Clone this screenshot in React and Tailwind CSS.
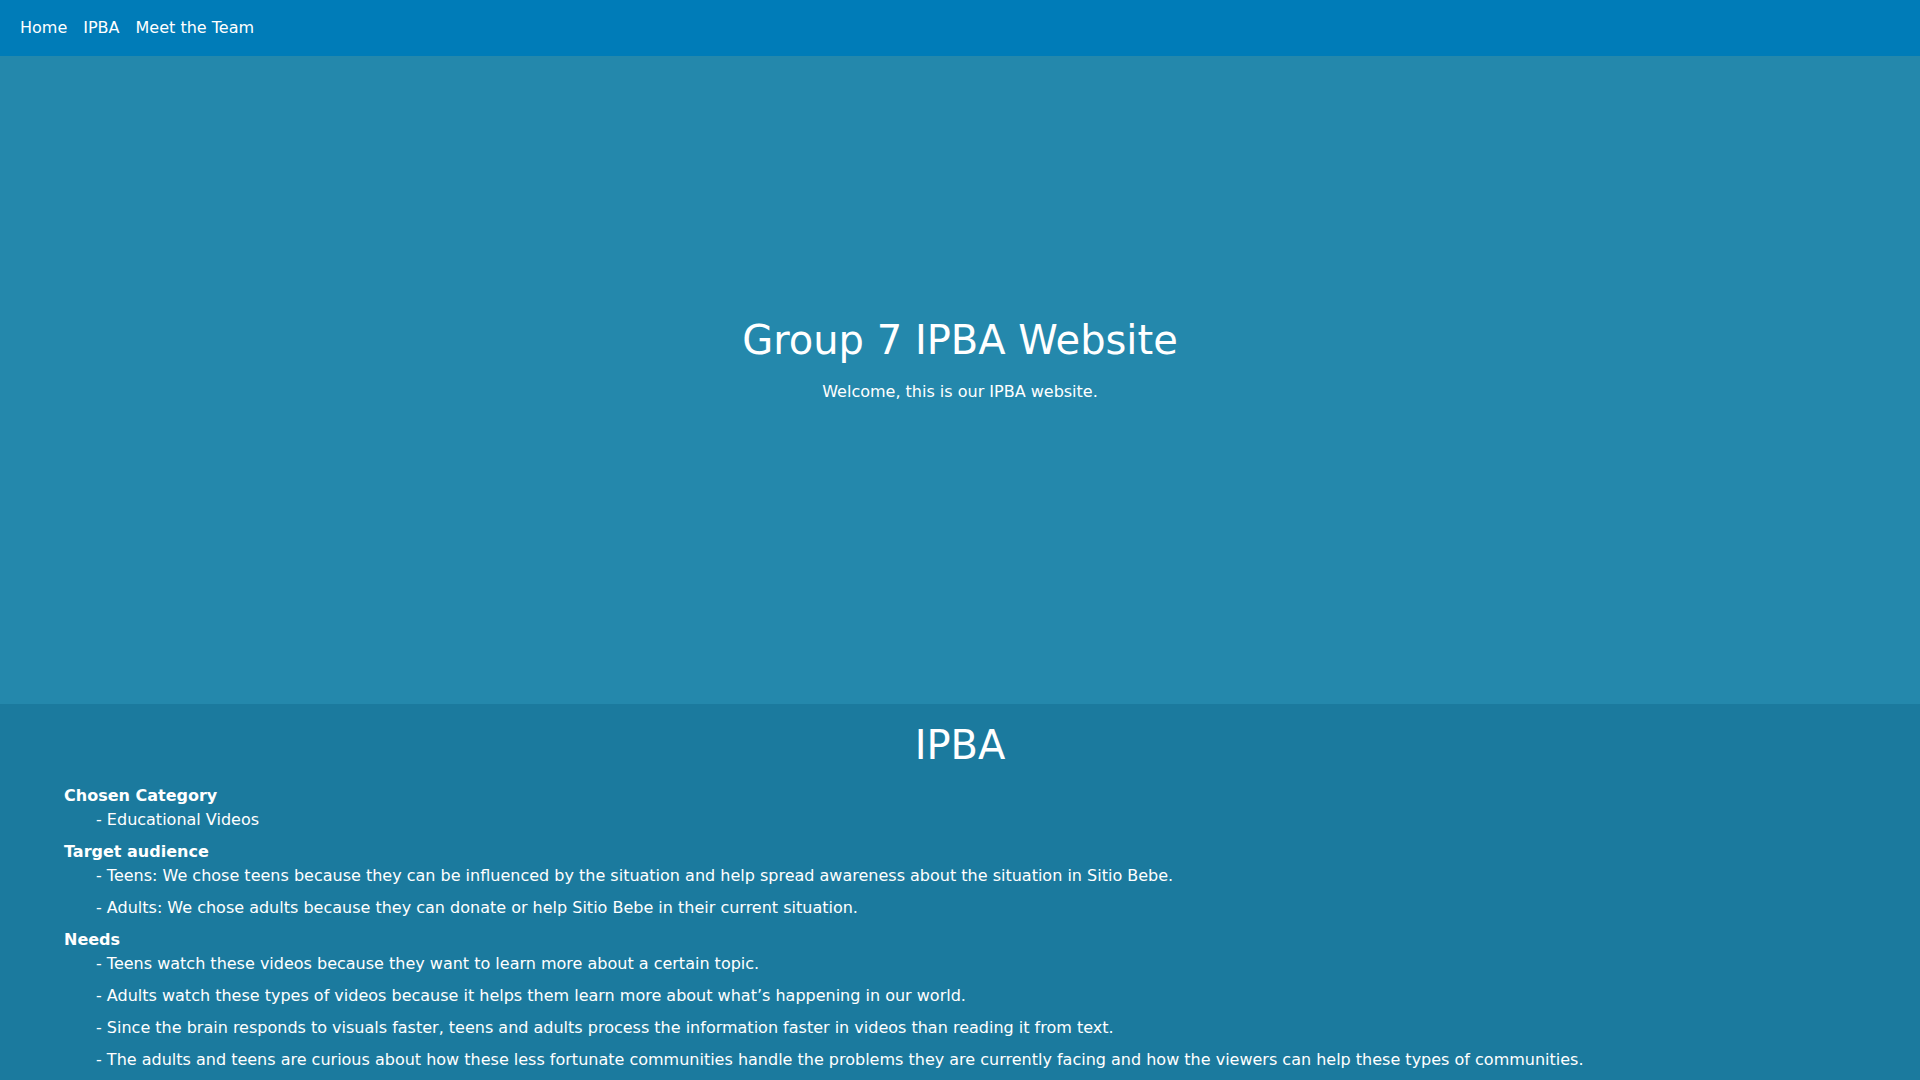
const links = ["Home", "IPBA", "Meet the Team"];

const sections = [
  {
    title: "Chosen Category",
    items: ["- Educational Videos"],
  },
  {
    title: "Target audience",
    items: [
      "- Teens: We chose teens because they can be influenced by the situation and help spread awareness about the situation in Sitio Bebe.",
      "- Adults: We chose adults because they can donate or help Sitio Bebe in their current situation.",
    ],
  },
  {
    title: "Needs",
    items: [
      "- Teens watch these videos because they want to learn more about a certain topic.",
      "- Adults watch these types of videos because it helps them learn more about what\u2019s happening in our world.",
      "- Since the brain responds to visuals faster, teens and adults process the information faster in videos than reading it from text.",
      "- The adults and teens are curious about how these less fortunate communities handle the problems they are currently facing and how the viewers can help these types of communities.",
    ],
  },
];

export default function App() {
  return (
    <div className="min-h-screen bg-[#1b7a9e] font-['DejaVu_Sans',sans-serif] text-white">
      <nav className="flex h-14 items-center gap-4 bg-[#007cb8] px-5 text-base">
        {links.map((l) => (
          <a key={l} href="#" className="leading-6 text-white">
            {l}
          </a>
        ))}
      </nav>

      <header className="flex h-[648px] flex-col items-center bg-[#2488ac] pt-[260px]">
        <h1 className="text-[40px] leading-[48px]">Group 7 IPBA Website</h1>
        <p className="mt-4 text-base leading-6">Welcome, this is our IPBA website.</p>
      </header>

      <section className="bg-[#1b7a9e] px-16 pt-[17px] pb-10">
        <h2 className="mb-[15px] text-center text-[40px] leading-[48px]">IPBA</h2>
        {sections.map((s) => (
          <div key={s.title}>
            <h3 className="text-base leading-6 font-bold">{s.title}</h3>
            <ul>
              {s.items.map((it) => (
                <li key={it} className="mb-2 pl-8 text-base leading-6">
                  {it}
                </li>
              ))}
            </ul>
          </div>
        ))}
      </section>
    </div>
  );
}
